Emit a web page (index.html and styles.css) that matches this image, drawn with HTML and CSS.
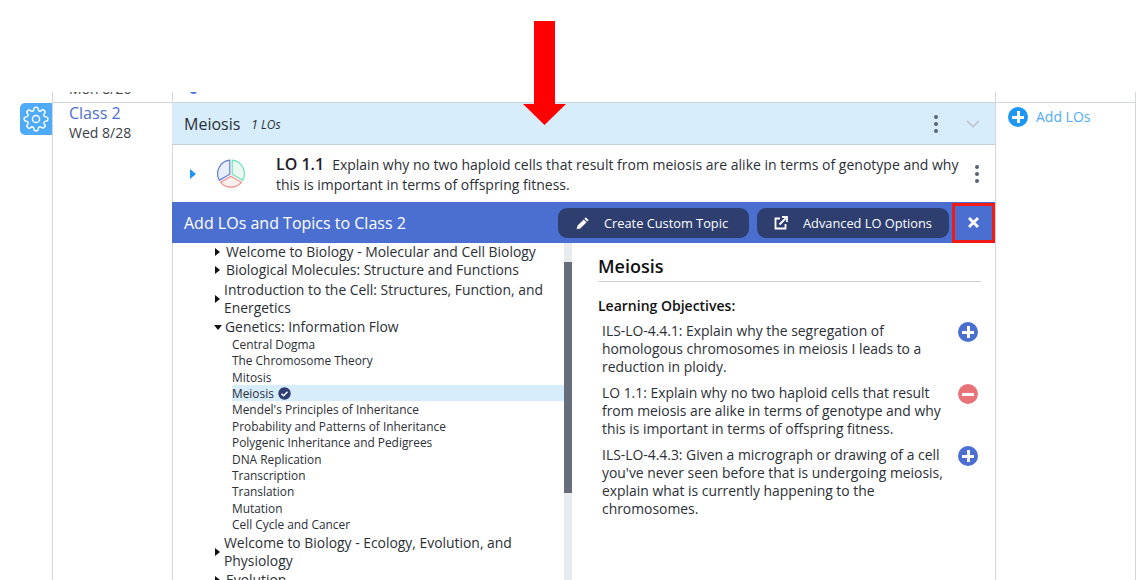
FILE: index.html
```html
<!DOCTYPE html>
<html lang="en">
<head>
<meta charset="utf-8">
<title>Add LOs and Topics</title>
<link rel="stylesheet" href="styles.css">
</head>
<body>
<svg class="arrow" width="43" height="105" viewBox="0 0 43 105"><path d="M11 0H32V83H43L21.500 104L0 83H11Z" fill="#ff0000"/></svg>
<div class="spacer"></div>
<div class="prev-row">
  <div class="gutter"></div>
  <div class="date-cell prev-date"><span>Mon 8/26</span></div>
  <div class="main-cell prev-main"><span class="prev-dot"></span></div>
  <div class="side-cell"></div>
</div>
<div class="row">
  <div class="gutter">
    <div class="gear">
      <svg width="26" height="26" viewBox="0 0 24 24" fill="none" stroke="#fff" stroke-width="1.300" stroke-linejoin="round"><circle cx="12" cy="12" r="3.300"/><path d="M19.400 15a1.650 1.650 0 0 0 .33 1.820l.06.06a2 2 0 0 1-2.830 2.830l-.06-.06a1.650 1.650 0 0 0-1.820-.33 1.650 1.650 0 0 0-1 1.510V21a2 2 0 0 1-4 0v-.09A1.650 1.650 0 0 0 9 19.400a1.650 1.650 0 0 0-1.820.33l-.06.06a2 2 0 0 1-2.830-2.830l.06-.06a1.650 1.650 0 0 0 .33-1.820 1.650 1.650 0 0 0-1.510-1H3a2 2 0 0 1 0-4h.09A1.650 1.650 0 0 0 4.600 9a1.650 1.650 0 0 0-.33-1.820l-.06-.06a2 2 0 0 1 2.830-2.830l.06.06a1.650 1.650 0 0 0 1.820.33H9a1.650 1.650 0 0 0 1-1.510V3a2 2 0 0 1 4 0v.09a1.650 1.650 0 0 0 1 1.510 1.650 1.650 0 0 0 1.820-.33l.06-.06a2 2 0 0 1 2.830 2.830l-.06.06a1.650 1.650 0 0 0-.33 1.820V9a1.650 1.650 0 0 0 1.510 1H21a2 2 0 0 1 0 4h-.09a1.650 1.650 0 0 0-1.510 1z"/></svg>
    </div>
  </div>
  <div class="date-cell">
    <a class="class-link">Class 2</a>
    <div class="class-date">Wed 8/28</div>
  </div>
  <div class="main-cell">
    <div class="topic-bar">
      <span class="topic-name">Meiosis</span>
      <em class="topic-count">1 LOs</em>
      <span class="dots topic-dots"><i></i><i></i><i></i></span>
      <svg class="chevron" width="14" height="8" viewBox="0 0 14 8" fill="none" stroke="#c3c8cf" stroke-width="1.800"><path d="M1 1l6 5.500L13 1"/></svg>
    </div>
    <div class="lo-row">
      <span class="caret-blue"></span>
      <svg class="pie" width="30" height="30" viewBox="0 0 30 30" stroke-width="1.200">
        <path d="M13.800 1.200A13.600 13.600 0 0 0 3.300 21.300L13.800 15.200Z" fill="#e8edf9" stroke="#5f7dd4"/>
        <path d="M16.200 1.200A13.600 13.600 0 0 1 26.700 21.300L16.200 15.200Z" fill="#eafaf3" stroke="#6fe0b6"/>
        <path d="M4.600 23.300L15 17.300L25.400 23.300A13.600 13.600 0 0 1 4.600 23.300Z" fill="#fdeeee" stroke="#f28f8f"/>
      </svg>
      <p class="lo-text"><strong>LO 1.1</strong>Explain why no two haploid cells that result from meiosis are alike in terms of genotype and why this is important in terms of offspring fitness.</p>
      <span class="dots lo-dots"><i></i><i></i><i></i></span>
    </div>
    <div class="add-bar">
      <span class="add-title">Add LOs and Topics to Class 2</span>
      <button class="dark-btn btn-custom">
        <svg width="14" height="14" viewBox="0 0 14 14" fill="#fff"><path d="M9.800 1.300l2.900 2.900-1.400 1.400-2.900-2.900zM7.700 3.400l2.900 2.900-6.300 6.300-3.600.7.700-3.600z"/></svg>
        <span>Create Custom Topic</span>
      </button>
      <button class="dark-btn btn-adv">
        <svg width="14" height="14" viewBox="0 0 14 14" fill="none" stroke="#fff" stroke-width="1.800"><path d="M6 2.500H1.500V12.500H11.500V8"/><path d="M5.500 8.500L12.500 1.500M8 1h5v5"/></svg>
        <span>Advanced LO Options</span>
      </button>
      <button class="close-btn">
        <svg width="11" height="11" viewBox="0 0 11 11" stroke="#fff" stroke-width="2.800"><path d="M1 1l9 9M10 1l-9 9"/></svg>
      </button>
    </div>
    <div class="browser">
      <div class="tree">
        <div class="t-item"><span class="tri"></span><span>Welcome to Biology - Molecular and Cell Biology</span></div>
        <div class="t-item"><span class="tri"></span><span>Biological Molecules: Structure and Functions</span></div>
        <div class="t-item t-wrap"><span class="tri"></span><span>Introduction to the Cell: Structures, Function, and Energetics</span></div>
        <div class="t-item"><span class="tri-down"></span><span>Genetics: Information Flow</span></div>
        <ul class="subs">
          <li>Central Dogma</li>
          <li>The Chromosome Theory</li>
          <li>Mitosis</li>
          <li class="sel">Meiosis <svg width="13" height="13" viewBox="0 0 13 13"><circle cx="6.500" cy="6.500" r="6.200" fill="#2f3f73"/><path d="M3.500 6.700l2.100 2.100 3.900-4" fill="none" stroke="#fff" stroke-width="1.500"/></svg></li>
          <li>Mendel's Principles of Inheritance</li>
          <li>Probability and Patterns of Inheritance</li>
          <li>Polygenic Inheritance and Pedigrees</li>
          <li>DNA Replication</li>
          <li>Transcription</li>
          <li>Translation</li>
          <li>Mutation</li>
          <li>Cell Cycle and Cancer</li>
        </ul>
        <div class="t-item t-wrap"><span class="tri"></span><span>Welcome to Biology - Ecology, Evolution, and Physiology</span></div>
        <div class="t-item"><span class="tri"></span><span>Evolution</span></div>
      </div>
      <div class="scrollbar"><div class="thumb"></div></div>
      <div class="detail">
        <h2>Meiosis</h2>
        <h3>Learning Objectives:</h3>
        <div class="obj"><p>ILS-LO-4.4.1: Explain why the segregation of homologous chromosomes in meiosis I leads to a reduction in ploidy.</p><span class="circle plus"></span></div>
        <div class="obj"><p>LO 1.1: Explain why no two haploid cells that result from meiosis are alike in terms of genotype and why this is important in terms of offspring fitness.</p><span class="circle minus"></span></div>
        <div class="obj"><p>ILS-LO-4.4.3: Given a micrograph or drawing of a cell you've never seen before that is undergoing meiosis, explain what is currently happening to the chromosomes.</p><span class="circle plus"></span></div>
      </div>
    </div>
  </div>
  <div class="side-cell">
    <a class="add-los"><span class="circle add-circle"></span>Add LOs</a>
  </div>
</div>
</body>
</html>
```
FILE: styles.css
```css
* { box-sizing: border-box; }
html, body { margin: 0; height: 580px; overflow: hidden; background: #fff; }
body { font-family: "Open Sans", sans-serif; color: #2b2f36; position: relative; }
.arrow { position: absolute; left: 523px; top: 21px; z-index: 3; width: 43px; height: 105px; }
.spacer { height: 92px; }
.prev-row, .row { display: grid; grid-template-columns: 52px 120px 823px 141px; width: 1136px; }
.prev-row { height: 10px; overflow: hidden; }
.row { height: 478px; }
.row > .date-cell, .row > .main-cell, .row > .side-cell { border-top: 1px solid #d4d6de; }
.gutter { min-width: 0; }
.date-cell { border-left: 1px solid #d4d6de; padding-left: 16px; min-width: 0; }
.prev-date { font-size: 14px; line-height: 20px; }
.prev-date span { display: block; margin-top: -13px; color: #444; }
.main-cell { min-width: 0; }
.prev-main { position: relative; border-left: 1px solid #d4d6de; }
.prev-dot { position: absolute; left: 17px; top: -5px; width: 7px; height: 7px; border-radius: 50%; background: #4a6fd0; }
.side-cell { border-left: 1px solid #d4d6de; border-right: 1px solid #d4d6de; min-width: 0; padding: 4px 0 0 12px; }
.gear { width: 32px; height: 32px; margin: 1px 0 0 20px; background: #4fabf7; border-radius: 5px 0 0 5px; display: flex; align-items: center; justify-content: center; }
.class-link { display: block; font-size: 16px; line-height: 21px; color: #4b6fd1; }
.class-date { font-size: 14px; line-height: 18px; color: #3a3d44; }
.topic-bar { height: 42px; background: #d7edfc; border-bottom: 1px solid #c9ced6; display: flex; align-items: center; padding-left: 12px; }
.topic-name { font-size: 16px; color: #2b2f36; }
.topic-count { font-size: 12px; margin-left: 11px; padding-top: 2px; }
.dots { display: flex; flex-direction: column; gap: 3px; }
.dots i { width: 4px; height: 4px; border-radius: 50%; background: #5a6272; display: block; }
.topic-dots { margin-left: auto; margin-right: 28px; }
.chevron { margin-right: 15px; }
.lo-row { height: 57px; display: flex; align-items: center; padding: 2px 0 0 17px; border-left: 1px solid #d4d6de; }
.caret-blue { width: 0; height: 0; border-left: 6px solid #1e96f5; border-top: 5px solid transparent; border-bottom: 5px solid transparent; margin: -2px 20px 0 0; }
.pie { margin: -2px 30px 0 0; flex: none; }
.lo-text { margin: 0; width: 690px; font-size: 14px; line-height: 20px; color: #2b2f36; }
.lo-text strong { font-size: 16px; font-weight: 600; margin-right: 8px; color: #1d2026; }
.lo-dots { margin-left: auto; margin-right: 16px; margin-top: -2px; }
.add-bar { height: 41px; background: #4b6fd0; display: flex; align-items: center; color: #fff; }
.add-title { font-size: 16px; font-weight: 500; padding-left: 12px; margin-right: auto; }
.dark-btn { height: 30px; border: 0; border-radius: 9px; background: #2d3e6f; color: #fff; font: 12.800px "Open Sans", sans-serif; display: flex; align-items: center; padding: 0 16px 0 18px; gap: 14px; }
.btn-custom { width: 191px; margin-right: 8px; }
.btn-adv { width: 192px; margin-right: 3px; padding-left: 17px; gap: 15px; }
.close-btn { width: 43px; height: 40px; background: #4b6fd0; border: 3px solid #f01b14; padding: 0; display: flex; align-items: center; justify-content: center; }
.browser { display: grid; grid-template-columns: 391px 8px 1fr; height: 337px; overflow: hidden; border-left: 1px solid #d4d6de; border-right: 0; }
.tree { padding: 0 0 0 42px; min-width: 0; }
.t-item { display: flex; align-items: center; font-size: 13.900px; line-height: 18px; color: #2b2f36; }
.tri { flex: none; width: 0; height: 0; border-left: 5px solid #111; border-top: 4.500px solid transparent; border-bottom: 4.500px solid transparent; margin-right: 6px; }
.t-wrap { margin: 2px 0 1px; }
.t-wrap .tri { margin-right: 4px; }
.tri-down { flex: none; width: 0; height: 0; border-top: 5px solid #111; border-left: 4.500px solid transparent; border-right: 4.500px solid transparent; margin: 0 3px 0 -1px; }
.t-wrap span:last-child { width: 330px; }
.subs { list-style: none; margin: 0; padding: 0 0 0 17px; }
.subs li { font-size: 11.900px; line-height: 16.360px; color: #2b2f36; height: 16.360px; display: flex; align-items: center; gap: 4px; }
.subs li.sel { background: #d7edfc; }
.scrollbar { background: #e9ebee; padding-top: 19px; }
.thumb { height: 231px; background: #656e7a; }
.detail { padding: 11px 14px 0 26px; min-width: 0; }
.detail h2 { margin: 0; font-size: 18px; font-weight: 600; line-height: 24px; padding-bottom: 3px; border-bottom: 1px solid #c9ccd6; color: #111; }
.detail h3 { margin: 14px 0 0; font-size: 14px; font-weight: 600; line-height: 20px; color: #111; }
.obj { display: flex; justify-content: space-between; padding-left: 4px; margin-top: 6px; }
.obj + .obj { margin-top: 8px; }
.obj p { margin: 0; width: 345px; font-size: 13.900px; line-height: 18px; color: #2b2f36; }
.circle { width: 20px; height: 20px; border-radius: 50%; position: relative; flex: none; display: inline-block; margin-right: 3px; }
.circle::before, .circle::after { content: ""; position: absolute; background: #fff; }
.plus { background: #4b6fd0; }
.minus { background: #e8747a; }
.plus::before, .minus::before, .add-circle::before { left: 4px; right: 4px; top: 8.500px; height: 3px; }
.plus::after, .add-circle::after { top: 4px; bottom: 4px; left: 8.500px; width: 3px; }
.add-los { display: flex; align-items: center; gap: 8px; font-size: 14px; color: #4fabf7; line-height: 20px; }
.add-circle { background: #1e96f5; margin-right: 0; }
```
